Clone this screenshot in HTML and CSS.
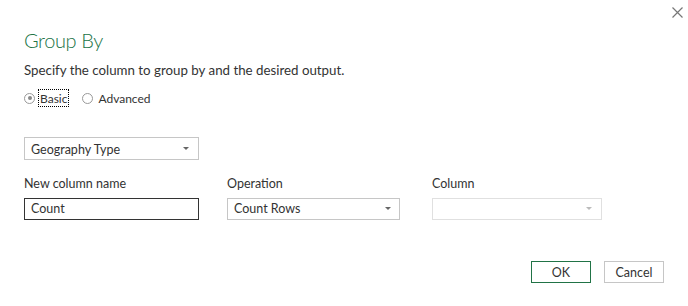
FILE: index.html
```html
<!DOCTYPE html>
<html lang="en">
<head>
	<meta charset="UTF-8">
	<title>Group By</title>
	<link rel="stylesheet" href="styles.css">
</head>
<body>
	<div class="dialog">
		<div class="topbar">
			<span class="close">
				<svg width="11" height="11" viewBox="0 0 11 11"><path d="M0.5 0.5 L10.5 10.5 M10.5 0.5 L0.5 10.5" stroke="#777" stroke-width="1.2" fill="none"/></svg>
			</span>
		</div>
		<h1 class="title">Group By</h1>
		<p class="desc">Specify the column to group by and the desired output.</p>
		<div class="radios">
			<label class="radio"><span class="dot checked"></span><span class="focus">Basic</span></label>
			<label class="radio"><span class="dot"></span><span>Advanced</span></label>
		</div>
		<div class="select geo">Geography Type<span class="arrow"></span></div>
		<div class="grid">
			<div class="label">New column name</div>
			<div class="label">Operation</div>
			<div class="label">Column</div>
			<div class="input name">Count</div>
			<div class="select op">Count Rows<span class="arrow"></span></div>
			<div class="select col disabled"><span class="arrow"></span></div>
		</div>
		<div class="buttons">
			<button class="btn ok">OK</button>
			<button class="btn">Cancel</button>
		</div>
	</div>
</body>
</html>
```

FILE: styles.css
```css
html, body{
	margin: 0;
	padding: 0;
	background: #fff;
}
body{
	width: 688px;
	height: 306px;
	font-family: Lato, "Open Sans", sans-serif;
	font-size: 12.5px;
	color: #333;
}
.dialog{
	padding: 0 24px;
}
.topbar{
	display: flex;
	justify-content: flex-end;
	height: 26px;
	padding-top: 7px;
	margin-right: -19px;
	box-sizing: border-box;
}
.close{
	width: 11px;
	height: 11px;
}
.close svg{
	display: block;
}
.title{
	margin: 0;
	font-size: 20px;
	font-weight: 300;
	letter-spacing: -0.4px;
	line-height: 28px;
	color: #217346;
}
.desc{
	margin: 7px 0 0;
	font-size: 13.3px;
	line-height: 18px;
}
.radios{
	display: flex;
	align-items: center;
	gap: 14px;
	margin-top: 9px;
	height: 20px;
	font-size: 12px;
}
.radio{
	display: flex;
	align-items: center;
	gap: 5px;
}
.dot{
	width: 11px;
	height: 11px;
	box-sizing: border-box;
	border: 1px solid #999;
	border-radius: 50%;
	position: relative;
}
.dot.checked::after{
	content: "";
	position: absolute;
	left: 2.5px;
	top: 2.5px;
	width: 4px;
	height: 4px;
	border-radius: 50%;
	background: #888;
}
.focus{
	outline: 1px dotted #000;
	padding: 1px 1px 0;
	margin-left: -1px;
}
.select, .input{
	position: relative;
	box-sizing: border-box;
	height: 23px;
	border: 1px solid #c6c6c6;
	padding: 2px 8px 0 6px;
	line-height: 19px;
}
.geo{
	width: 175px;
	margin-top: 29px;
}
.arrow{
	position: absolute;
	right: 9px;
	top: 9px;
	width: 0;
	height: 0;
	border-left: 3px solid transparent;
	border-right: 3px solid transparent;
	border-top: 3px solid #666;
}
.grid{
	display: grid;
	grid-template-columns: 175px 173px 174px;
	column-gap: 28px;
	margin-top: 15px;
}
.grid .label{
	line-height: 18px;
	margin-bottom: 5px;
}
.grid .label:nth-child(3), .grid .col{
	margin-left: 4px;
}
.input{
	border-color: #333;
	height: 22px;
	padding-top: 0;
	line-height: 20px;
}
.op, .col{
	height: 22px;
	padding-top: 0;
	line-height: 20px;
}
.op .arrow{
	top: 8px;
	right: 8px;
}
.col{
	border-color: #e0e0e0;
}
.col .arrow{
	top: 8px;
	border-top-color: #bbb;
}
.buttons{
	display: flex;
	justify-content: flex-end;
	gap: 13px;
	margin-top: 41px;
}
.btn{
	width: 60px;
	height: 22px;
	background: #fff;
	border: 1px solid #c6c6c6;
	font-family: inherit;
	font-size: 12.5px;
	color: #333;
	padding: 0;
}
.btn.ok{
	border-color: #217346;
}
```
